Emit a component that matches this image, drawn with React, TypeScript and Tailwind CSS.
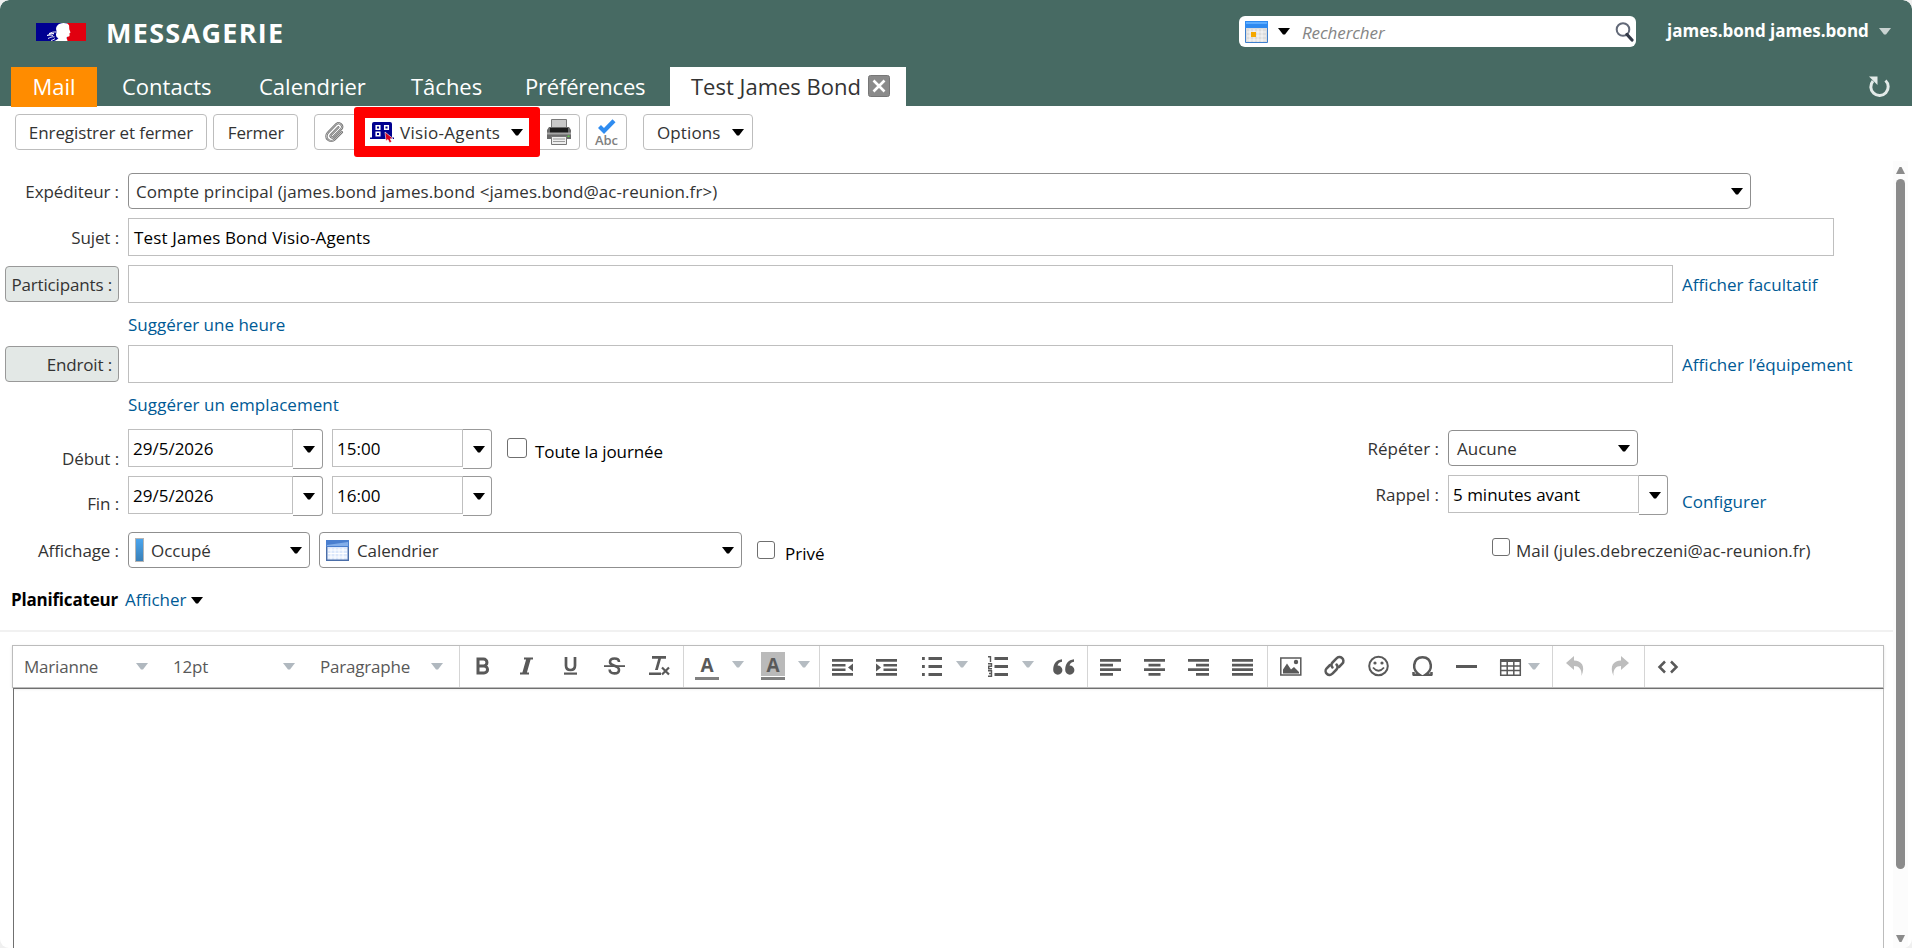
import type { ReactNode } from "react";

// ── small pieces ─────────────────────────────────────────────────────────────

type CaretProps = { className?: string };

function Caret({ className = "text-black" }: CaretProps) {
  return (
    <svg width="12" height="7" viewBox="0 0 12 7" aria-hidden="true" className={`shrink-0 ${className}`}>
      <path d="M0 0h12L7 6.600H5z" fill="currentColor" />
    </svg>
  );
}

type RowProps = { className: string; children: ReactNode };

function Row({ className, children }: RowProps) {
  return <div className={`flex items-start ${className}`}>{children}</div>;
}

function Label({ className = "", children }: { className?: string; children: ReactNode }) {
  return (
    <div className={`mr-[9px] flex w-[119px] shrink-0 items-center justify-end tracking-[-0.100px] ${className}`}>
      {children}
    </div>
  );
}

function LabelButton({ children }: { children: ReactNode }) {
  return (
    <button
      type="button"
      className="mt-px mr-[9px] ml-[5px] flex h-9 w-[114px] shrink-0 items-center justify-end rounded border border-[#999] bg-[#e3e8e6] pt-0.5 pr-[6px] tracking-[-0.150px]"
    >
      {children}
    </button>
  );
}

function Select({ className, children }: RowProps) {
  return (
    <div className={`flex h-9 shrink-0 items-center rounded border border-[#8f8f8f] bg-white pr-[7px] ${className}`}>
      {children}
      <Caret className="ml-auto text-black" />
    </div>
  );
}

function Combo({ value, width, buttonWidth = "w-[30px]" }: { value: string; width: string; buttonWidth?: string }) {
  return (
    <div className="flex shrink-0 items-start text-black">
      <div className={`flex h-[38px] items-center border border-[#bfbfbf] pt-0.5 pl-[4px] ${width}`}>{value}</div>
      <div
        className={`flex h-10 items-center justify-center rounded-r border border-l-0 border-[#999] pl-[3px] ${buttonWidth}`}
      >
        <Caret />
      </div>
    </div>
  );
}

function Checkbox({ className }: { className: string }) {
  return <span className={`block shrink-0 rounded-[3px] border border-[#6f6f6f] bg-white ${className}`} />;
}

function Link({ className = "", children }: { className?: string; children: ReactNode }) {
  return <span className={`whitespace-nowrap text-[#005a95] ${className}`}>{children}</span>;
}

// ── drawings ─────────────────────────────────────────────────────────────────

function FlagLogo() {
  return (
    <svg width="50" height="18" viewBox="0 0 50 18" aria-hidden="true">
      <path d="M0 0h32v18H0z" fill="#000091" />
      <path d="M31 0h19v18H31z" fill="#e1000f" />
      <path
        d="M21 3C22.500.8 25 0 27.500 0c3 0 5 .8 5.600 2.600l.2 3.600 1.200 3.200-1 .8.1 2.400c-.2 1-1 1.200-2.300 1.100-.8.500-.8 1.400-.3 2.300L31.500 18H18c2-.8 3.500-1.700 4.500-3-1.500-.3-2-1-2.300-2C19.500 11 21 9.500 20.500 8c-.7-2-.5-3.700.5-5z"
        fill="#fff"
      />
      <path
        d="M20.500 9c-3-.2-5 .3-7.500 1.600 2-.3 3-.3 5 .100-2 0-4 .5-7 1.800 2.500-.5 4-.4 6 .200M12 15.500c2-.8 3.500-2 6.500-1.700M15 17.500c1.500-.3 2.500-.9 4-1.900"
        fill="none"
        stroke="#fff"
        strokeWidth=".9"
      />
    </svg>
  );
}

function SearchCalendarIcon() {
  return (
    <svg width="23" height="22" viewBox="0 0 23 22" aria-hidden="true">
      <path d="M.5.500h22v21H.5z" fill="#dcdcdc" stroke="#3d7fce" />
      <path d="M0 0h23v7H0z" fill="#2f8af0" />
      <path d="M1 1h21v2H1z" fill="#5cacff" />
      <path d="M2 11h19M2 15h19M2 19h19M5 8v13M9 8v13M13 8v13M17 8v13" stroke="#fff" strokeWidth=".7" />
      <path d="M6 11h5v5H6z" fill="#f5a800" />
    </svg>
  );
}

function CalendarIcon() {
  return (
    <svg width="23" height="21" viewBox="0 0 23 21" aria-hidden="true">
      <path d="M.5.500h22v20H.5z" fill="#dce8fb" stroke="#4a6ea9" />
      <path d="M0 0h23v7H0z" fill="#4a7fcf" />
      <path d="M1 5l21-3v4H1z" fill="#83aee9" />
      <path d="M2 10h19M2 13.500h19M2 17h19M5 8v12M9 8v12M13 8v12M17 8v12" stroke="#fff" />
      <path d="M.7 7v13.300h21.600V7" fill="none" stroke="#4a6ea9" strokeWidth="1.400" />
    </svg>
  );
}

function MagnifierIcon() {
  return (
    <svg width="19" height="20" viewBox="0 0 19 20" aria-hidden="true">
      <circle cx="8" cy="7.500" r="6.300" fill="#fff" stroke="#626978" strokeWidth="2" />
      <path d="M12 12.500l5 5.500" stroke="#343a48" strokeWidth="3.200" strokeLinecap="round" />
    </svg>
  );
}

function RefreshIcon() {
  return (
    <svg width="22" height="22" viewBox="0 0 22 22" aria-hidden="true">
      <path d="M5 5A8.700 8.700 0 1 0 17.500 4.500" fill="none" stroke="#e3eae8" strokeWidth="3" />
      <path d="M1 .5h8.500V9z" fill="#e3eae8" />
    </svg>
  );
}

function PaperclipIcon() {
  const clip =
    "m15.500 6.500-7.700 7.900a1.700 1.700 0 0 0 2.400 2.400l8.400-8.400a3.700 3.700 0 0 0-5.200-5.200L4.500 12.300a5 5 0 0 0 7.100 7.100l7.600-7.700";

  return (
    <svg width="24" height="22" viewBox="0 0 24 23" aria-hidden="true" fill="none" strokeLinecap="round">
      <path d={clip} stroke="#6e6e6e" strokeWidth="2.400" />
      <path d={clip} stroke="#cfcfcf" strokeWidth=".9" />
    </svg>
  );
}

function VisioIcon() {
  return (
    <svg width="25" height="22" viewBox="0 0 25 22" aria-hidden="true">
      <path d="M2 16.500V3q0-2 2-2h16q2 0 2 2v13.500h2V18H0v-1.500z" fill="#00008f" />
      <g fill="none" stroke="#fff" strokeWidth="1.500">
        <path d="M6.200 4.700h3.600v3.600H6.200zM14.700 4.700h3.600v3.600h-3.600zM6.200 11.200h3.600v3.600H6.200z" />
      </g>
      <path d="M15 11l8 6.500-2.800.3 1.500 3-2.200 1-1.500-3.300L16 20z" fill="#d8001c" stroke="#fff" strokeWidth=".6" />
    </svg>
  );
}

function PrinterIcon() {
  return (
    <svg width="24" height="26" viewBox="0 0 24 26" aria-hidden="true">
      <path d="M4.500.500h15V9h-15z" fill="#c9c9c9" stroke="#7a7a7a" />
      <path d="M2 8h20l2 3v9H0v-9z" fill="#6b6b6b" />
      <path d="M3 9h18v5H3z" fill="#1c1c1c" />
      <path d="M0 13.500h24v2H0z" fill="#a5a5a5" />
      <path d="M4.500 17.500h15v8h-15z" fill="#eee" stroke="#777" />
      <path d="M6 20h12M6 22.500h12" stroke="#999" />
      <path d="M20.500 16.500h2v1.500h-2z" fill="#62d34a" />
    </svg>
  );
}

function SpellcheckIcon() {
  return (
    <div className="flex flex-col items-center">
      <svg width="18" height="15" viewBox="0 0 18 15" aria-hidden="true">
        <path d="M1.500 7.500l4.500 4.500L16 1.800" fill="none" stroke="#2f8cf0" strokeWidth="4.200" />
      </svg>
      <span className="text-[13px] leading-[12px] font-semibold text-[#808080]">Abc</span>
    </div>
  );
}

// ── header ───────────────────────────────────────────────────────────────────

const TABS = [
  { name: "Contacts", className: "w-[140px] pl-[25px]" },
  { name: "Calendrier", className: "w-[150px] pl-[22px]" },
  { name: "Tâches", className: "w-[114px] pl-[24px]" },
  { name: "Préférences", className: "w-[169px] pl-[24px] tracking-[-0.200px]" },
];

function Header() {
  return (
    <header className="flex h-[106px] flex-col rounded-t-[9px] bg-[#476a63] text-white">
      <div className="flex h-[67px] shrink-0 items-start">
        <div className="mt-[23px] ml-9">
          <FlagLogo />
        </div>
        <h1 className="mt-[15px] ml-[20px] text-[27px] leading-[36px] font-bold tracking-[1.300px]">MESSAGERIE</h1>
        <div className="mt-4 ml-auto flex h-[31px] w-[397px] items-center rounded-md bg-white pr-[2px] pl-[6px]">
          <SearchCalendarIcon />
          <Caret className="ml-[10px] text-black" />
          <span className="ml-[12px] pt-0.5 text-[17px] tracking-[-0.100px] text-[#858585] italic">Rechercher</span>
          <div className="ml-auto">
            <MagnifierIcon />
          </div>
        </div>
        <div className="mt-[19px] ml-[31px] flex w-[245px] items-center leading-6 whitespace-nowrap">
          <span className="w-[212px] text-[17px] font-bold">james.bond james.bond</span>
          <Caret className="text-[#c9d3d1]" />
        </div>
      </div>
      <nav className="flex h-10 items-start pl-[11px] text-[22px] leading-[38px] whitespace-nowrap">
        <div className="h-10 w-[86px] shrink-0 bg-[#ff8c00] text-center">Mail</div>
        {TABS.map((tab) => (
          <div key={tab.name} className={`shrink-0 ${tab.className}`}>
            {tab.name}
          </div>
        ))}
        <div className="flex h-10 w-[236px] shrink-0 items-start bg-white pl-[21px] text-[#333]">
          <span className="w-[177px]">Test James Bond</span>
          <svg width="22" height="22" viewBox="0 0 22 22" aria-label="Fermer l'onglet" className="mt-2">
            <rect x=".5" y=".5" width="21" height="21" rx="2" fill="#8b8b8b" stroke="#777" />
            <path d="M5.500 5.500l11 11m0-11l-11 11" stroke="#fff" strokeWidth="2.600" />
          </svg>
        </div>
        <div className="mt-[9px] mr-[22px] ml-auto">
          <RefreshIcon />
        </div>
      </nav>
    </header>
  );
}

// ── actions ──────────────────────────────────────────────────────────────────

const ACTION = "flex h-9 shrink-0 items-center rounded border border-[#bdbdbd] bg-white whitespace-nowrap";

function Actions() {
  return (
    <div className="relative flex h-[67px] items-start pt-2 pl-[15px]">
      <button type="button" className={`${ACTION} w-[192px] justify-center pt-0.5 tracking-[-0.100px]`}>
        Enregistrer et fermer
      </button>
      <button type="button" className={`${ACTION} ml-[6px] w-[85px] justify-center pt-0.5 pl-px tracking-[-0.200px]`}>
        Fermer
      </button>
      <button type="button" className={`${ACTION} ml-4 w-[48px] pl-[8px]`}>
        <PaperclipIcon />
      </button>
      <button type="button" className="flex h-9 w-[172px] items-center pl-2">
        <VisioIcon />
        <span className="ml-[5px] w-[111px] pt-0.5 text-left tracking-[0.300px] whitespace-nowrap">Visio-Agents</span>
        <Caret />
      </button>
      <button type="button" className={`${ACTION} w-[46px] pl-[12px]`}>
        <PrinterIcon />
      </button>
      <button type="button" className={`${ACTION} ml-[6px] w-[41px] justify-center`}>
        <SpellcheckIcon />
      </button>
      <button type="button" className={`${ACTION} ml-4 w-[110px] pl-[13px]`}>
        <span className="w-[75px] pt-0.5 text-left tracking-[0.100px]">Options</span>
        <Caret />
      </button>
      {/* highlight frame around the Visio-Agents menu */}
      <div className="absolute top-px left-[354px] h-[50px] w-[186px] rounded-[3px] border-[11px] border-[#ff0000]" />
    </div>
  );
}

// ── appointment form ─────────────────────────────────────────────────────────

const INPUT = "flex h-[38px] shrink-0 items-center border border-[#bfbfbf] pt-0.5 pl-[5px] text-black";

function AppointmentForm() {
  return (
    <section className="h-[459px] whitespace-nowrap">
      <Row className="h-[45px]">
        <Label className="h-[38px]">Expéditeur :</Label>
        <Select className="w-[1623px] pl-[7px]">
          <span className="pt-0.5 tracking-[0.090px]">
            Compte principal (james.bond james.bond &lt;james.bond@ac-reunion.fr&gt;)
          </span>
        </Select>
      </Row>
      <Row className="h-[47px]">
        <Label className="h-[40px]">Sujet :</Label>
        <div className={`${INPUT} w-[1706px] tracking-[0.150px]`}>Test James Bond Visio-Agents</div>
      </Row>
      <Row className="h-[80px]">
        <LabelButton>Participants :</LabelButton>
        <div>
          <div className={`${INPUT} w-[1545px]`} />
          <Link className="block leading-[44px]">Suggérer une heure</Link>
        </div>
        <Link className="ml-[9px] leading-[40px]">Afficher facultatif</Link>
      </Row>
      <Row className="h-[84px]">
        <LabelButton>Endroit :</LabelButton>
        <div>
          <div className={`${INPUT} w-[1545px]`} />
          <Link className="block leading-[44px] tracking-[0.050px]">Suggérer un emplacement</Link>
        </div>
        <Link className="ml-[9px] leading-[40px] tracking-[0.050px]">Afficher l’équipement</Link>
      </Row>
      <Row className="h-[47px]">
        <Label className="h-[60px]">Début :</Label>
        <Combo value="29/5/2026" width="w-[165px]" />
        <div className="ml-[9px]">
          <Combo value="15:00" width="w-[131px]" buttonWidth="w-[29px]" />
        </div>
        <Checkbox className="mt-[9px] ml-[15px] size-5" />
        <span className="ml-[8px] leading-[46px] tracking-[-0.100px] text-black">Toute la journée</span>
        <div className="ml-auto pr-[9px] leading-[40px]">Répéter :</div>
        <Select className="mt-px mr-[255px] w-[190px] pl-[8px]">
          <span className="pt-px">Aucune</span>
        </Select>
      </Row>
      <Row className="h-[56px]">
        <Label className="h-[56px]">Fin :</Label>
        <Combo value="29/5/2026" width="w-[165px]" />
        <div className="ml-[9px]">
          <Combo value="16:00" width="w-[131px]" buttonWidth="w-[29px]" />
        </div>
        <div className="ml-auto pr-[9px] leading-[38px]">Rappel :</div>
        <div className="-mt-px mr-[225px] flex w-[220px] shrink-0">
          <Combo value="5 minutes avant" width="w-[191px]" buttonWidth="w-[29px]" />
          <Link className="ml-[14px] leading-[54px]">Configurer</Link>
        </div>
      </Row>
      <Row className="h-[51px]">
        <Label className="h-[38px]">Affichage :</Label>
        <Select className="w-[182px] pl-[6px]">
          <span className="mr-[7px] h-6 w-[9px] border border-[#b5b5b5] bg-linear-to-b from-[#4aa5ee] to-[#3a80b8]" />
          <span className="pt-0.5">Occupé</span>
        </Select>
        <Select className="ml-[9px] w-[423px] pl-[6px]">
          <CalendarIcon />
          <span className="ml-2 pt-0.5 tracking-[-0.100px]">Calendrier</span>
        </Select>
        <Checkbox className="mt-[9px] ml-[15px] size-[18px]" />
        <span className="ml-[10px] leading-[43px] text-black">Privé</span>
        <Checkbox className="mt-[6px] ml-auto size-[18px]" />
        <span className="ml-[6px] w-[377px] leading-[38px] tracking-[0.020px]">
          Mail (jules.debreczeni@ac-reunion.fr)
        </span>
      </Row>
      <div className="flex h-[49px] items-center border-b-2 border-[#f1f1f1] pb-[13px] pl-[11px]">
        <span className="w-[114px] text-[17px] font-bold tracking-[-0.200px] text-black">Planificateur</span>
        <Link className="w-[66px]">Afficher</Link>
        <Caret />
      </div>
    </section>
  );
}

// ── editor ───────────────────────────────────────────────────────────────────

const GLYPHS: Record<string, ReactNode> = {
  bold: (
    <path d="M6 3h5.500a3.300 3.300 0 0 1 0 6.900H6zm0 6.900h6a3.550 3.550 0 0 1 0 7.100H6z" fill="none" stroke="currentColor" strokeWidth="3" />
  ),
  italic: <path d="M8 1.500h9v2h-2.400L10.900 16.500H13v2H4v-2h2.400L10.100 3.500H8z" />,
  underline: (
    <>
      <path d="M6 1v8.500q0 4.500 4.500 4.500T15 9.500V1" fill="none" stroke="currentColor" strokeWidth="2.700" />
      <path d="M4 16.500h13v2.200H4z" />
    </>
  ),
  strike: (
    <>
      <path d="M15 6Q15 2.500 10.500 2.500T6 6.200q0 2 4.500 3.500t4.500 4.200q0 3.500-4.600 3.500T5.600 13.500" fill="none" stroke="currentColor" strokeWidth="2.600" />
      <path d="M0 9.200h21v1.800H0z" />
    </>
  ),
  clear: (
    <>
      <path d="M4 0h14v2.700h-5L9.800 14H7l3.200-11.300H4zM1 16.500h12V19H1z" />
      <path d="M14 11.500l7 7m0-7l-7 7" stroke="currentColor" strokeWidth="2.200" />
    </>
  ),
  outdent: <path d="M0 3h21v2.800H0zm0 5h13.500v2.500H0zm0 4.500h13.500V15H0zM0 17h21v2.800H0zM21 7.500v8L16 11.500z" />,
  indent: <path d="M0 3h21v2.800H0zm7.500 5H21v2.500H7.500zm0 4.500H21V15H7.500zM0 17h21v2.800H0zM0 7.500l5 4-5 4z" />,
  bullets: <path d="M6.500 1H20v3H6.500zm0 8H20v3H6.500zm0 8H20v3H6.500zM0 1h2.800v3H0zm0 8h2.800v3H0zm0 8h2.800v3H0z" />,
  numbers: (
    <>
      <path d="M6.500 1H20v3H6.500zm0 8H20v3H6.500zm0 8H20v3H6.500z" />
      <path d="M0 .7h2.500V6M0 7.800h3.500v2.500H.7v2.500H4M0 14.800h3.500v5.500H0m1-2.800h2.500" fill="none" stroke="currentColor" strokeWidth="1.400" />
    </>
  ),
  quote: (
    <path d="M3.500 9.500A4.600 4.600 0 1 1-.8 14C-.8 7.500 2.200 4 8 3.300v2.400C5.300 6.200 4 7.500 3.500 9.500zm12 0A4.600 4.600 0 1 1 11.200 14c0-6.500 3-10 8.800-10.700v2.400c-2.700.5-4 1.800-4.500 3.800z" />
  ),
  left: <path d="M0 3h21v2.800H0zm0 4.700h13v2.800H0zm0 4.600h21v2.800H0zM0 17h13v2.800H0z" />,
  center: <path d="M0 3h21v2.800H0zm4.500 4.700h12v2.800h-12zM0 12.300h21v2.800H0zM4.500 17h12v2.800h-12z" />,
  right: <path d="M0 3h21v2.800H0zm8 4.700h13v2.800H8zm-8 4.600h21v2.800H0zM8 17h13v2.800H8z" />,
  justify: <path d="M0 3h21v2.800H0zm0 4.700h21v2.800H0zm0 4.600h21v2.800H0zM0 17h21v2.800H0z" />,
  image: (
    <>
      <path d="M.8 2h20v17H.8z" fill="none" stroke="currentColor" strokeWidth="1.500" />
      <path d="M3 17.500v-4l4-6 4 6 3-2.500 5 5v1.500z" />
      <circle cx="16" cy="6" r="2.200" />
    </>
  ),
  link: (
    <g fill="none" stroke="currentColor" strokeWidth="2.500" strokeLinecap="round">
      <path d="M8.500 11.500a3.500 3.500 0 0 1 0-5l4-4a3.600 3.600 0 0 1 6 5l-3.500 3.500" />
      <path d="M12.500 8.500a3.500 3.500 0 0 1 0 5l-4 4a3.600 3.600 0 0 1-6-5L6 9" />
    </g>
  ),
  smiley: (
    <>
      <circle cx="10.500" cy="10" r="9.300" fill="none" stroke="currentColor" strokeWidth="2" />
      <circle cx="7" cy="7" r="1.600" />
      <circle cx="14" cy="7" r="1.600" />
      <path d="M5 11.500q5.500 6.500 11 0" fill="none" stroke="currentColor" strokeWidth="1.900" />
    </>
  ),
  omega: (
    <path d="M1 18.700h6.500C3.500 16 1.800 12.500 2.200 9 2.800 4 6 1.200 10.500 1.200S18.200 4 18.800 9c.4 3.500-1.300 7-5.300 9.700H20M1.500 16v3.500M19.500 16v3.500" fill="none" stroke="currentColor" strokeWidth="2.500" />
  ),
  rule: <path d="M0 9h21v3H0z" />,
  table: (
    <>
      <path d="M0 3h21v3H0z" />
      <path d="M.7 4v15.300h19.600V4M0 10h21M0 14.500h21M7.200 4v16M13.800 4v16" fill="none" stroke="currentColor" strokeWidth="1.500" />
    </>
  ),
  undo: <path d="M1 7l8-7v4.500c7 0 12 5 7.500 15.500C17 13 14 10 9 10v4z" />,
  redo: <path d="M20 7l-8-7v4.500c-7 0-12 5-7.500 15.500C4 13 7 10 12 10v4z" />,
  code: <path d="M8 4.500L2.500 10 8 15.500M14 4.500l5.500 5.500-5.500 5.500" fill="none" stroke="currentColor" strokeWidth="2.500" />,
};

type ToolProps = { name: string; className?: string; menu?: string };

function Tool({ name, className = "w-11", menu }: ToolProps) {
  return (
    <div className={`flex shrink-0 items-center pl-3 ${className}`}>
      <svg width="21" height="20" viewBox="0 0 21 20" fill="currentColor" aria-hidden="true" className="shrink-0 overflow-visible">
        {GLYPHS[name]}
      </svg>
      {menu && <Caret className={`text-[#b5bcc2] ${menu}`} />}
    </div>
  );
}

function Picker({ value, className }: { value: string; className: string }) {
  return (
    <div className={`flex shrink-0 items-center justify-between ${className}`}>
      <span className="pt-0.5">{value}</span>
      <Caret className="text-[#b0b8bf]" />
    </div>
  );
}

function ColorTool({ fill = "" }: { fill?: string }) {
  return (
    <div className="flex w-[66px] shrink-0 items-center pl-[10px]">
      <div className="flex flex-col items-center gap-px">
        <span className={`ml-[1px] block h-6 w-6 text-center text-[19px] leading-[27px] font-bold ${fill}`}>A</span>
        <span className="h-[3px] w-6 bg-[#808080]" />
      </div>
      <Caret className="-mt-1 ml-[13px] text-[#b5bcc2]" />
    </div>
  );
}

const GROUP = "flex h-full shrink-0 border-r border-[#d5d5d5] pb-px";

function Editor() {
  return (
    <section className="mt-[13px] ml-[12px] w-[1872px] text-[#595959]">
      <div className="flex h-[43px] border border-[#bcbcbc] shadow-sm">
        <div className={`${GROUP} w-[447px] pl-[11px] text-[17px] tracking-[-0.200px]`}>
          <Picker value="Marianne" className="w-[124px]" />
          <Picker value="12pt" className="ml-[25px] w-[122px]" />
          <Picker value="Paragraphe" className="ml-[25px] w-[123px]" />
        </div>
        <div className={`${GROUP} w-[224px]`}>
          {["bold", "italic", "underline", "strike", "clear"].map((name) => (
            <Tool key={name} name={name} />
          ))}
        </div>
        <div className={`${GROUP} w-[136px]`}>
          <ColorTool />
          <ColorTool fill="bg-[#bababa]" />
        </div>
        <div className={`${GROUP} w-[268px]`}>
          <Tool name="outdent" />
          <Tool name="indent" className="w-[46px]" />
          <Tool name="bullets" className="w-[66px]" menu="-mt-1 ml-[13px]" />
          <Tool name="numbers" className="w-[66px]" menu="-mt-1 ml-[13px]" />
          <Tool name="quote" className="w-[45px]" />
        </div>
        <div className={`${GROUP} w-[180px]`}>
          {["left", "center", "right", "justify"].map((name) => (
            <Tool key={name} name={name} />
          ))}
        </div>
        <div className={`${GROUP} w-[285px]`}>
          {["image", "link", "smiley", "omega", "rule"].map((name) => (
            <Tool key={name} name={name} />
          ))}
          <Tool name="table" className="w-[60px]" menu="ml-[7px]" />
        </div>
        <div className={`${GROUP} w-[92px] text-[#bdbdbd]`}>
          <Tool name="undo" className="w-11" />
          <Tool name="redo" />
        </div>
        <Tool name="code" />
      </div>
      <div className="ml-px h-[261px] border-x border-t border-t-[#707070] border-r-[#bcbcbc] border-l-[#707070]" />
    </section>
  );
}

// ── page ─────────────────────────────────────────────────────────────────────

function Scrollbar() {
  return (
    <div className="flex h-[787px] w-[15px] shrink-0 flex-col items-center bg-[#fcfcfc] pt-[6px] text-[#8b8b8b]">
      <svg width="9" height="7" viewBox="0 0 9 7" fill="currentColor" aria-hidden="true">
        <path d="M3.500 0h2L9 7H0z" />
      </svg>
      <div className="mt-[5px] h-[690px] w-[9px] rounded-full bg-[#8b8b8b]" />
      <svg width="9" height="7" viewBox="0 0 9 7" fill="currentColor" aria-hidden="true" className="mt-[66px]">
        <path d="M3.500 7h2L9 0H0z" />
      </svg>
    </div>
  );
}

export default function App() {
  return (
    <div className="h-[948px] w-[1912px] overflow-hidden bg-[#f0f0f0]">
      <div className="h-full overflow-hidden rounded-[9px] bg-white font-['Open_Sans','Noto_Sans',sans-serif] text-[17px] leading-6 text-[#333]">
        <Header />
        <Actions />
        <div className="flex">
          <main className="h-[775px] w-[1893px] shrink-0 overflow-hidden">
            <AppointmentForm />
            <Editor />
          </main>
          <div className="-mt-3">
            <Scrollbar />
          </div>
        </div>
      </div>
    </div>
  );
}
